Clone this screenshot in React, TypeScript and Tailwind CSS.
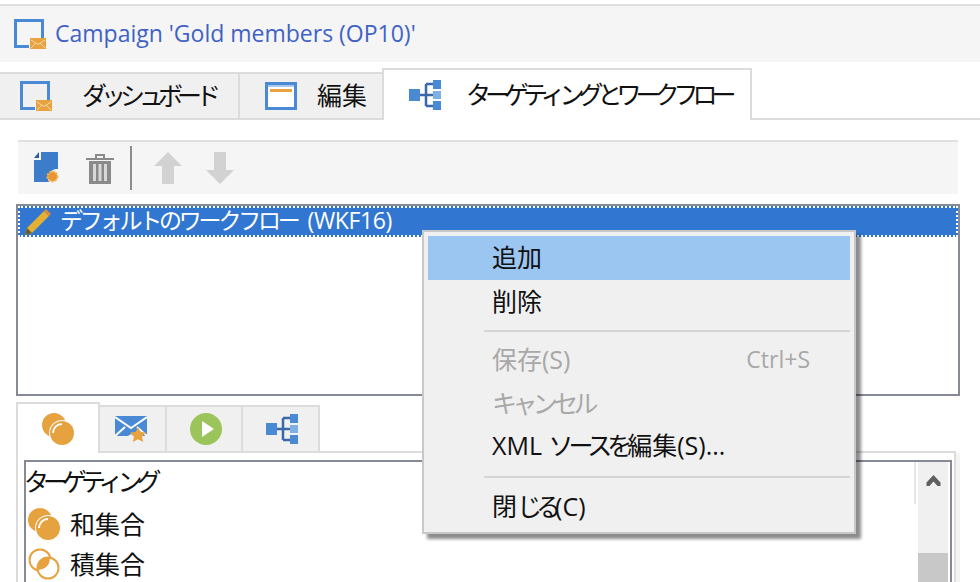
import React from "react";

const jp = "font-['Open_Sans','Noto_Sans_CJK_JP',sans-serif]";

const CampaignIcon = ({ className = "" }: { className?: string }) => (
  <svg viewBox="0 0 32 30" width="32" height="30" className={className}>
    <path d="M0 0h30v19h-3V3H3v23h12v3H0z" fill="#4a8ad4" />
    <rect x="16" y="19" width="16" height="11" fill="#e8a23e" />
    <path d="M17 21l7 4.500 7-4.500M17 29l5-5M31 29l-5-5" stroke="#f6d9ae" strokeWidth="1" fill="none" />
  </svg>
);

const FlowIcon = () => (
  <svg viewBox="0 0 32 30" width="32" height="30">
    <rect x="0" y="9" width="11" height="12" fill="#4a8ad4" />
    <path d="M11 15h13M17 4v22M17 4h7M17 26h7" stroke="#3a68a8" strokeWidth="2.500" fill="none" />
    <rect x="24" y="0" width="8" height="9" fill="#4a8ad4" />
    <rect x="24" y="11" width="8" height="8" fill="#7fb0e4" />
    <rect x="24" y="21" width="8" height="9" fill="#4a8ad4" />
  </svg>
);

const CirclesIcon = ({ outline = false }: { outline?: boolean }) => (
  <svg viewBox="0 0 32 32" width="32" height="32">
    {outline ? (
      <>
        <circle cx="12" cy="12" r="10.500" fill="#fff" stroke="#e6a23f" strokeWidth="2" />
        <circle cx="20" cy="20" r="10.500" fill="#fff" stroke="#e6a23f" strokeWidth="2" />
        <path d="M20 9.500a10.500 10.500 0 0 0-10.500 10.500c0 .5 0 1 .1 1.500a10.500 10.500 0 0 0 12-12c-.5-.1-1-.1-1.600 0z" fill="#e6a23f" />
      </>
    ) : (
      <>
        <circle cx="12" cy="12" r="12" fill="#e6a23f" />
        <circle cx="20" cy="20" r="13" fill="#fff" />
        <circle cx="20" cy="20" r="12" fill="#e6a23f" />
        <path d="M11 20a9 9 0 0 1 9-9" stroke="#fff" strokeWidth="2" fill="none" />
      </>
    )}
  </svg>
);

const Separator = () => <div className="h-0.5 ml-14 bg-[#d4d4d4]" />;

const MenuItem = ({
  children,
  hint,
  disabled,
  active,
  className = "",
}: {
  children: React.ReactNode;
  hint?: string;
  disabled?: boolean;
  active?: boolean;
  className?: string;
}) => (
  <div
    className={`flex items-center justify-between pl-16 pr-10 text-[25px] leading-none ${
      active ? "bg-[#9cc6f2]" : ""
    } ${disabled ? "text-[#a8a8a8]" : "text-[#111]"} ${className}`}
  >
    <span className="whitespace-nowrap">{children}</span>
    {hint && <span className="text-[23px]">{hint}</span>}
  </div>
);

export default function App() {
  return (
    <div className={`relative w-[980px] h-[582px] overflow-hidden bg-white pt-1 ${jp}`}>
      {/* title */}
      <div className="flex h-[58px] items-center gap-[9px] border-t-2 border-[#e0e0e0] bg-[#f5f5f5] pl-3.5">
        <CampaignIcon />
        <span className="pb-0.5 text-[23px] text-[#3f62c4]">Campaign 'Gold members (OP10)'</span>
      </div>

      {/* main tabs */}
      <div className="mt-1.5 flex h-[52px] items-end border-b-2 border-[#dcdcdc]">
        <div className="flex h-[46px] w-60 items-center border-t-2 border-r-2 border-[#dcdcdc] bg-[#f0f0f0] pl-5">
          <CampaignIcon />
          <span className="ml-[30px] text-[25px] tracking-[-6px] text-[#111]">ダッシュボード</span>
        </div>
        <div className="flex h-[46px] w-[142px] items-center border-t-2 border-[#dcdcdc] bg-[#f0f0f0] pl-[25px]">
          <CampaignEditIcon />
          <span className="ml-5 text-[25px] text-[#111]">編集</span>
        </div>
        <div className="-mb-0.5 flex h-[52px] w-[370px] items-center border-x-2 border-t-2 border-[#dcdcdc] bg-white pl-[25px]">
          <FlowIcon />
          <span className="ml-[25px] text-[25px] tracking-[-6px] text-[#111]">ターゲティングとワークフロー</span>
        </div>
      </div>

      {/* toolbar */}
      <div className="mx-[18px] mt-5 flex h-[54px] w-[940px] items-center border-t-2 border-[#e0e0e0] bg-[#f5f5f5] pl-4">
        <svg viewBox="0 0 26 32" width="26" height="32">
          <path d="M7 0h17v17a9 9 0 0 0-9 13H0V8h7z" fill="#3d7cc9" />
          <path d="M0 6l5-6v6z" fill="#2b5c9e" />
          <circle cx="18.500" cy="24.500" r="5" fill="#e8962e" stroke="#f3b565" strokeWidth="2" strokeDasharray="2 1.300" />
        </svg>
        <svg viewBox="0 0 28 32" width="28" height="32" className="ml-[26px]">
          <path d="M0 6h28v2H0zM9 6V2h10v4h-2V4h-6v2z" fill="#8a8a8a" />
          <path d="M3 9h22v23H3z" fill="#8a8a8a" />
          <path d="M7 12h3v17H7zM12.500 12h3v17h-3zM18 12h3v17h-3z" fill="#d8d8d8" />
        </svg>
        <div className="ml-4 h-11 w-0.5 bg-[#8c8c8c]" />
        <svg viewBox="0 0 28 32" width="28" height="32" className="ml-[22px]">
          <path d="M14 0l14 14H20v18H8V14H0z" fill="#d2d2d2" />
        </svg>
        <svg viewBox="0 0 28 32" width="28" height="32" className="ml-6">
          <path d="M14 32L0 18h8V0h12v18h8z" fill="#d2d2d2" />
        </svg>
      </div>

      {/* workflow list */}
      <div className="mx-4 mt-2.5 h-[192px] w-[944px] border-2 border-[#868a95] bg-white">
        <div className="flex h-[31px] items-center border-2 border-dotted border-white bg-[#3176d0] pl-1 text-white">
          <svg viewBox="0 0 28 28" width="28" height="28">
            <path d="M1 27l2-7L20 3l5 5L8 25z" fill="#e3b034" />
            <path d="M20 3l2-2 5 5-2 2z" fill="#d98a3a" />
            <path d="M1 27l2-7 5 5z" fill="#6b5a2a" />
          </svg>
          <span className="ml-2 whitespace-nowrap pb-0.5 text-[23px] tracking-[-0.4px]">
            <span className="tracking-[-3.200px]">デフォルトのワークフロー</span>
            <span className="ml-2.5">(WKF16)</span>
          </span>
        </div>
      </div>

      {/* bottom panel */}
      <div className="mx-4 mt-1.5 h-[180px] w-[944px]">
        <div className="mr-1 flex h-[51px] items-end border-b-2 border-[#dcdcdc]">
          <div className="-mb-0.5 flex h-[51px] w-[84px] items-center justify-center border-x-2 border-t-2 border-[#dcdcdc] bg-white">
            <CirclesIcon />
          </div>
          <div className="flex h-[46px] w-[67px] items-center justify-center border-t-2 border-r-2 border-[#dcdcdc] bg-[#f0f0f0] pr-1">
            <svg viewBox="0 0 32 27" width="32" height="27">
              <path d="M0 0h32v20H19l-3-2-3 2H0z" fill="#4a8ad4" />
              <path d="M0 1l16 11L32 1M0 20l10-9M32 20l-10-9" stroke="#fff" strokeWidth="2" fill="none" />
              <path d="M23 11l2.500 5 5.500.6-4 3.800 1.100 5.600-5.100-2.800-5.100 2.800 1.100-5.600-4-3.800 5.500-.6z" fill="#e8a23e" />
            </svg>
          </div>
          <div className="flex h-[46px] w-[76px] items-center justify-center border-t-2 border-r-2 border-[#dcdcdc] bg-[#f0f0f0] pl-1">
            <svg viewBox="0 0 32 32" width="32" height="32">
              <circle cx="16" cy="16" r="16" fill="#9bc45a" />
              <path d="M12 8l12 8-12 8z" fill="#fff" />
            </svg>
          </div>
          <div className="flex h-[46px] w-[77px] items-center justify-center border-t-2 border-r-2 border-[#dcdcdc] bg-[#f0f0f0] pl-0.5">
            <FlowIcon />
          </div>
        </div>
        <div className="h-[130px] border-r-4 border-[#f4f4f4]">
          <div className="h-full border-x-2 border-[#dcdcdc] pt-[7px] pl-1.5 pr-0.5">
            <div className="flex h-full border-t-2 border-x-2 border-[#868a95]">
              <div className="flex-1 text-[25px] leading-none text-[#111]">
                <div className="mt-[7px] -ml-0.5 tracking-[-6px]">ターゲティング</div>
                <div className="mt-3.5 flex items-center gap-2.5 pl-0.5">
                  <CirclesIcon />
                  和集合
                </div>
                <div className="mt-2 flex items-center gap-2.5 pl-0.5">
                  <CirclesIcon outline />
                  積集合
                </div>
              </div>
              <div className="mr-0.5 h-[42px] w-0.5 bg-[#e6e6e6]" />
              <div className="flex w-[32px] flex-col border-r-2 border-white bg-[#f0f0f0]">
                <svg viewBox="0 0 15 12" width="15" height="12" className="mx-auto mt-[13px]">
                  <path d="M7.500 0L15 8v4h-3L7.500 7 3 12H0V8z" fill="#606060" />
                </svg>
                <div className="mt-[67px] h-8 bg-[#c8c8c8]" />
              </div>
            </div>
          </div>
        </div>
      </div>

      {/* context menu */}
      <div className="absolute left-[422px] top-[230px] w-[434px] h-[304px] border-2 border-[#c8c8c8] bg-[#f0f0f0] p-1 shadow-[5px_5px_3px_rgba(0,0,0,0.45)]">
        <MenuItem active className="h-11 pb-0.5">追加</MenuItem>
        <MenuItem className="mt-px h-11 pb-1">削除</MenuItem>
        <div className="mt-[5px]">
          <Separator />
        </div>
        <MenuItem disabled hint="Ctrl+S" className="mt-1.5 h-11 pb-0.5">保存(S)</MenuItem>
        <MenuItem disabled className="h-11 pb-0.5">
          <span className="tracking-[-4.600px]">キャンセル</span>
        </MenuItem>
        <MenuItem className="h-11 pb-1.5">
          XML <span className="tracking-[-5px]">ソースを</span>
          <span>編集(S)...</span>
        </MenuItem>
        <div className="mt-1.5">
          <Separator />
        </div>
        <MenuItem className="mt-1 h-11 pt-1">
          閉<span className="tracking-[-6px]">じる</span>
          <span>(C)</span>
        </MenuItem>
      </div>
    </div>
  );
}

function CampaignEditIcon() {
  return (
    <svg viewBox="0 0 32 28" width="32" height="28">
      <rect x="0" y="0" width="32" height="28" fill="#4a8ad4" />
      <rect x="3" y="3" width="26" height="22" fill="#fff" />
      <rect x="3" y="3" width="26" height="2" fill="#a8c8ec" />
      <rect x="5" y="7" width="22" height="3" fill="#e8a23e" />
    </svg>
  );
}
